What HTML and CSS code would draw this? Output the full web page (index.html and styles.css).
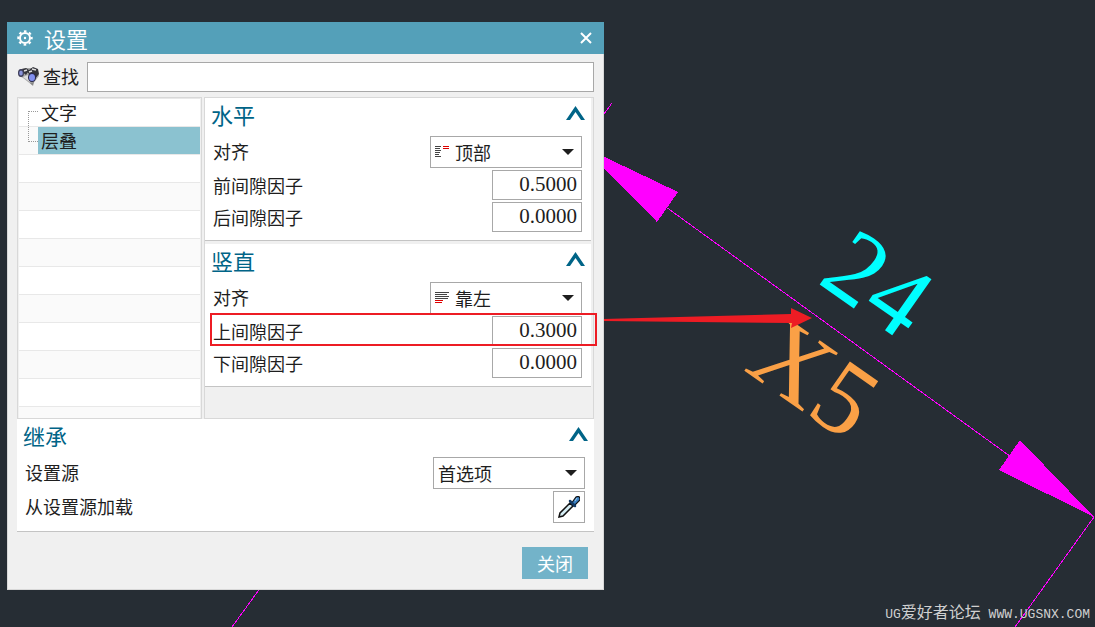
FILE: index.html
```
<!DOCTYPE html>
<html lang="zh-CN">
<head>
    <meta charset="UTF-8">
    <title>设置</title>
    <link rel="stylesheet" href="styles.css">
</head>
<body>
    <svg class="drawing" viewBox="0 0 1095 627" preserveAspectRatio="xMinYMin slice">
        <!-- dimension lines -->
        <g class="dim-line">
            <path d="M612 103 L232 627"/>
            <path d="M590 152 L1094 517"/>
            <path d="M1094 517 L1015 627"/>
        </g>
        <path class="dim-arrow" d="M590 150 L678 192 L657 222 L590 154 Z"/>
        <path class="dim-arrow" d="M1094 517 L1020 440 L999 470 Z"/>
        <text class="dim-text dim-top" transform="translate(878 284) rotate(35)" y="34">24</text>
        <text class="dim-text dim-bottom" transform="translate(814 378) rotate(35)" y="34">X5</text>
        <path class="pointer" d="M603 319 L791 314 L791 308 L812 318 L791 328 L792 323 L603 321 Z"/>
    </svg>

    <div class="dialog">
        <div class="title-bar">
            <svg class="gear" viewBox="0 0 16 16" width="16" height="16">
                <circle cx="8" cy="8" r="5" fill="none" stroke="#fff" stroke-width="2"/>
                <circle cx="8" cy="8" r="6.7" fill="none" stroke="#fff" stroke-width="2" stroke-dasharray="2.63 2.63" stroke-dashoffset="1.3"/>
                <circle cx="8" cy="8" r="1.2" fill="#fff"/>
            </svg>
            <h1>设置</h1>
            <button class="close-icon" aria-label="关闭窗口">
                <svg viewBox="0 0 12 12" width="12" height="12"><path d="M1 1 L11 11 M11 1 L1 11" stroke="#fff" stroke-width="2"/></svg>
            </button>
        </div>

        <div class="content">
            <div class="search">
                <svg viewBox="0 0 23 19" width="23" height="19">
                    <path d="M1 5 L6 1 L16 1 L21 4 L22 9 L15 18 L6 11 L2 9 Z" fill="#aaa"/>
                    <path d="M3 3 L9 1 L12 3 L9 8 Z M12 3 L16 0 L21 2 L22 7 L18 12 L10 5 Z" fill="#35353b"/>
                    <path d="M7 4 L10 3 M15 2 L19 3 M12 5 L15 4" stroke="#ddd" stroke-width="1.5"/>
                    <path d="M6 10 L11 8 L13 15 Z" fill="#ddd"/>
                    <ellipse cx="4" cy="6" rx="3" ry="4" fill="#3c3c58"/>
                    <ellipse cx="4" cy="6" rx="1.8" ry="2.6" fill="#8a94da"/>
                    <ellipse cx="15" cy="10.500" rx="4" ry="4.500" fill="#26264a"/>
                    <ellipse cx="15" cy="10.500" rx="3" ry="3.500" fill="#8290ee"/>
                    <path d="M13 16 L17 15 L16 19 Z" fill="#888"/>
                </svg>
                <label for="search">查找</label>
                <input type="text" id="search">
            </div>

            <div class="panes">
                <ul class="tree">
                    <li><a href="#">文字</a></li>
                    <li class="selected"><a href="#">层叠</a></li>
                </ul>

                <div class="settings">
                    <section class="group">
                        <div class="group-header">
                            <h2>水平</h2>
                            <button class="collapse" aria-label="折叠水平"><svg viewBox="0 0 19 14" width="19" height="14"><path d="M0 14 L9.500 0 L19 14 L15 14 L9.500 6 L4 14 Z"/></svg></button>
                        </div>
                        <div class="row">
                            <label for="hAlign">对齐</label>
                            <div class="select-box">
                                <svg viewBox="0 0 14 12" width="14" height="12">
                                    <path d="M0 .5H6 M0 2.500H5 M0 4.500H6 M0 6.500H5 M0 8.500H4 M0 10.500H6" stroke="#444"/>
                                    <path d="M8 .5H14 M8 2.500H14" stroke="#d00"/>
                                </svg>
                                <select id="hAlign"><option>顶部</option></select>
                            </div>
                        </div>
                        <div class="row">
                            <label for="gapBefore">前间隙因子</label>
                            <input type="text" class="number" id="gapBefore" value="0.5000">
                        </div>
                        <div class="row">
                            <label for="gapAfter">后间隙因子</label>
                            <input type="text" class="number" id="gapAfter" value="0.0000">
                        </div>
                    </section>

                    <section class="group">
                        <div class="group-header">
                            <h2>竖直</h2>
                            <button class="collapse" aria-label="折叠竖直"><svg viewBox="0 0 19 14" width="19" height="14"><path d="M0 14 L9.500 0 L19 14 L15 14 L9.500 6 L4 14 Z"/></svg></button>
                        </div>
                        <div class="row">
                            <label for="vAlign">对齐</label>
                            <div class="select-box">
                                <svg viewBox="0 0 14 12" width="14" height="12">
                                    <path d="M0 .5H14 M0 2.500H12 M0 4.500H14 M0 6.500H13" stroke="#444"/>
                                    <path d="M0 8.500H8 M0 10.500H7" stroke="#d00"/>
                                </svg>
                                <select id="vAlign"><option>靠左</option></select>
                            </div>
                        </div>
                        <div class="row highlight">
                            <label for="gapAbove">上间隙因子</label>
                            <input type="text" class="number" id="gapAbove" value="0.3000">
                        </div>
                        <div class="row">
                            <label for="gapBelow">下间隙因子</label>
                            <input type="text" class="number" id="gapBelow" value="0.0000">
                        </div>
                    </section>
                </div>
            </div>

            <section class="group">
                <div class="group-header">
                    <h2>继承</h2>
                    <button class="collapse" aria-label="折叠继承"><svg viewBox="0 0 19 14" width="19" height="14"><path d="M0 14 L9.500 0 L19 14 L15 14 L9.500 6 L4 14 Z"/></svg></button>
                </div>
                <div class="row">
                    <label for="source">设置源</label>
                    <div class="select-box">
                        <select id="source"><option>首选项</option></select>
                    </div>
                </div>
                <div class="row">
                    <label for="load">从设置源加载</label>
                    <button class="picker" id="load">
                        <svg viewBox="0 0 22 22" width="22" height="22">
                            <path d="M1 21 L2 17 L12 7 L15 10 L5 20 Z" fill="#d6eef5" stroke="#111" stroke-width="1.5"/>
                            <path d="M13 8 L18 1 Q22 -1 22 4 L16 10 Z" fill="#3b82c4" stroke="#111" stroke-width="1.200"/>
                            <path d="M12 5 L17 10" stroke="#123a66" stroke-width="2.500" stroke-linecap="round"/>
                            <path d="M17 5 L19 2" stroke="#9ccaf0"/>
                        </svg>
                    </button>
                </div>
            </section>

            <div class="footer">
                <button class="close-button">关闭</button>
            </div>
        </div>
    </div>

    <div class="watermark">UG<span>爱好者论坛</span> WWW.UGSNX.COM</div>
</body>
</html>
```
FILE: styles.css
```
* {
    box-sizing: border-box;
}
body {
    position: relative;
    min-height: 100vh;
    margin: 0;
    padding: 22px 7px 37px;
    overflow: hidden;
    background-color: #262d34;
    color: #1e1e1e;
    font-family: "Noto Sans CJK SC", sans-serif;
    font-size: 18px;
    font-weight: 400;
}
button, input, select {
    margin: 0;
    padding: 0;
    border: 1px solid #a8a8a8;
    border-radius: 0;
    background: white;
    color: inherit;
    font: inherit;
}
h1, h2 {
    margin: 0;
    font-size: 22px;
    font-weight: 400;
}

/* drawing area */
.drawing {
    position: absolute;
    top: 0;
    left: 0;
    width: 100%;
    height: 100%;
}
.dim-line {
    fill: none;
    stroke: #ff00ff;
    shape-rendering: crispEdges;
}
.dim-arrow {
    fill: #ff00ff;
    shape-rendering: crispEdges;
}
.dim-text {
    font-family: "Liberation Serif", serif;
    font-size: 104px;
    font-weight: 400;
    text-anchor: middle;
}
.dim-top {
    fill: #00ffff;
}
.dim-bottom {
    fill: #faa046;
}
.pointer {
    fill: #ed1c24;
}

/* dialog */
.dialog {
    position: relative;
    max-width: 597px;
    background-color: #f0f0f0;
}
.title-bar {
    display: flex;
    align-items: center;
    height: 32px;
    padding: 0 12px 0 10px;
    background-color: #54a0b9;
    color: white;
}
.title-bar h1 {
    flex: 1;
    margin-left: 11px;
    line-height: 32px;
}
.close-icon {
    display: flex;
    border: none;
    background: none;
}
.content {
    padding: 8px 9px 10px;
    border: 1px solid #d8d8d8;
    border-top: none;
}
.search {
    display: flex;
    align-items: flex-start;
    height: 30px;
    margin-bottom: 5px;
}
.search svg {
    margin-top: 5px;
}
.search label {
    margin: 0 8px 0 3px;
    line-height: 28px;
}
.search input {
    flex: 1;
    min-width: 0;
    height: 30px;
    padding: 0 6px;
}
.panes {
    display: flex;
    gap: 2px;
    height: 322px;
}

.tree {
    width: 185px;
    margin: 0;
    padding: 0 1px;
    border: 1px solid #d8d8d8;
    list-style: none;
    background: repeating-linear-gradient(#e8e8e8 0 1px, white 1px 28px, #e8e8e8 28px 29px, #fafafa 29px 56px) content-box white;
}
.tree li {
    position: relative;
    height: 28px;
    padding: 1px 0 0 19px;
}
.tree a {
    display: block;
    height: 27px;
    padding-left: 3px;
    color: inherit;
    line-height: 27px;
    text-decoration: none;
}
.tree .selected a {
    background-color: #8bc2d0;
}
.tree .selected::before {
    content: "";
    position: absolute;
    left: 9px;
    bottom: 12px;
    width: 9px;
    height: 29px;
    border: 1px dotted #999;
    border-right: none;
}

.settings {
    flex: 1;
    padding-right: 2px;
    border: 1px solid #d8d8d8;
}
.group {
    padding-bottom: 8px;
    border-bottom: 1px solid #c4c4c4;
    background-color: white;
}
.settings .group {
    margin-bottom: 3px;
}
.group-header {
    display: flex;
    justify-content: space-between;
    align-items: flex-start;
    height: 38px;
    padding: 0 6px;
    color: #006487;
}
.group-header h2 {
    line-height: 32px;
}
.collapse {
    display: flex;
    margin-top: 8px;
    border: none;
    background: none;
}
.collapse path {
    fill: #006487;
}
.row {
    position: relative;
    display: flex;
    justify-content: space-between;
    align-items: flex-start;
    padding: 0 9px 0 8px;
}
.row + .row {
    margin-top: 2px;
}
.row label {
    line-height: 30px;
}
.select-box {
    position: relative;
    display: flex;
    align-items: center;
    width: 152px;
    height: 32px;
    padding-left: 4px;
    border: 1px solid #a8a8a8;
}
.select-box svg {
    margin-right: 6px;
}
.select-box select {
    flex: 1;
    height: 30px;
    border: none;
    background: none;
    appearance: none;
}
.select-box::after {
    content: "";
    position: absolute;
    right: 7px;
    border: 6px solid transparent;
    border-top-color: #1e1e1e;
    border-bottom: none;
    pointer-events: none;
}
.number {
    width: 90px;
    height: 30px;
    padding: 0 4px 2px 0;
    font-family: "Liberation Serif", serif;
    font-size: 21px;
    text-align: right;
}
.highlight::after {
    content: "";
    position: absolute;
    top: -3px;
    right: -6px;
    bottom: 0;
    left: 5px;
    border: 2px solid #ed1c24;
    pointer-events: none;
}
.picker {
    display: flex;
    justify-content: center;
    align-items: center;
    width: 32px;
    height: 32px;
}
.footer {
    display: flex;
    justify-content: flex-end;
    padding: 15px 6px 0 0;
}
.close-button {
    width: 66px;
    height: 32px;
    border: none;
    background-color: #73b3c9;
    color: white;
}

.watermark {
    position: absolute;
    right: 5px;
    bottom: 0;
    color: #d0d0d0;
    font-family: "Liberation Mono", monospace;
    font-size: 13px;
    line-height: 24px;
}
.watermark span {
    font-family: "Noto Sans CJK SC", sans-serif;
    font-size: 16px;
}
```
